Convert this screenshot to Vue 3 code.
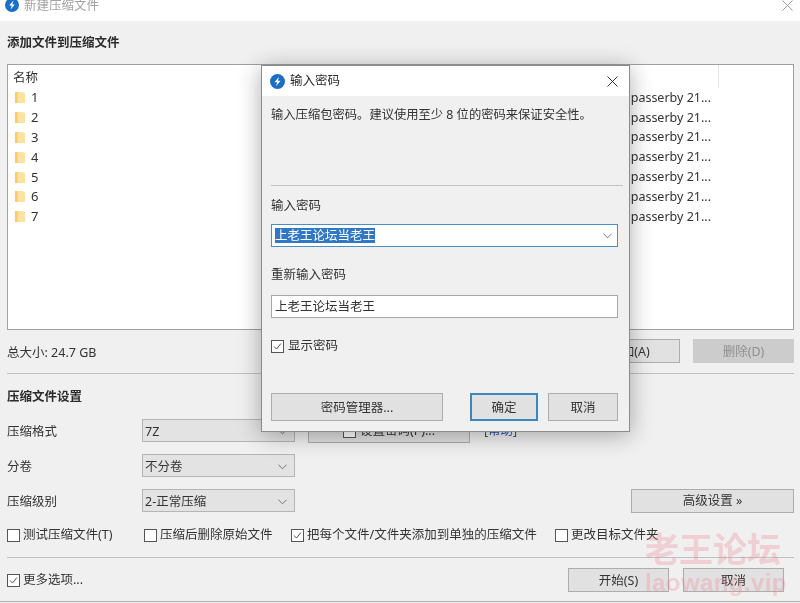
<template>
  <div class="window">
    <div class="titlebar">
      <svg class="logo" viewBox="0 0 14 14"><circle cx="7" cy="7" r="7" fill="#1a6fc4" /><path d="M8.4 2.6 4.2 7.6h2.5L5.6 11.4l4.2-5H7.3z" fill="#fff" /></svg>
      <span class="win-title">新建压缩文件</span>
      <svg class="close" viewBox="0 0 11 11"><path d="M.5.5l10 10M10.5.5l-10 10" stroke="#9a9a9a" fill="none" /></svg>
    </div>

    <div class="content">
      <div class="heading first">添加文件到压缩文件</div>

      <div class="list">
        <div class="list-head">
          <span>名称</span>
          <i class="col-line"></i>
        </div>
        <div class="list-row" v-for="n in rows" :key="n">
          <svg class="folder" viewBox="0 0 10 12"><path d="M0 1h7l3 1v10H0z" fill="#fde2a2" /><path d="M0 1h2.5v11H0z" fill="#f6cc6e" /></svg>
          <span class="row-name">{{ n }}</span>
          <span class="row-user">passerby 21...</span>
        </div>
      </div>

      <div class="summary">
        <span class="total">总大小: 24.7 GB</span>
        <button class="btn add">添加(A)</button>
        <button class="btn del">删除(D)</button>
      </div>

      <div class="rule"></div>
      <div class="heading second">压缩文件设置</div>

      <div class="form-row">
        <span class="form-label">压缩格式</span>
        <div class="select"><span>7Z</span><svg class="chev" viewBox="0 0 10 6"><path d="M.5.5 5 5 9.5.5" /></svg></div>
        <button class="btn pass"><i class="box"></i>设置密码(P)...</button>
        <span class="help">[帮助]</span>
      </div>
      <div class="form-row">
        <span class="form-label">分卷</span>
        <div class="select"><span>不分卷</span><svg class="chev" viewBox="0 0 10 6"><path d="M.5.5 5 5 9.5.5" /></svg></div>
      </div>
      <div class="form-row">
        <span class="form-label">压缩级别</span>
        <div class="select"><span>2-正常压缩</span><svg class="chev" viewBox="0 0 10 6"><path d="M.5.5 5 5 9.5.5" /></svg></div>
        <button class="btn advanced">高级设置 »</button>
      </div>

      <div class="options">
        <label class="check" v-for="o in options" :key="o.text">
          <i class="box"><svg v-if="o.on" viewBox="0 0 13 13"><path d="M2.5 6.5 5.3 9.5 10.5 3" /></svg></i>
          {{ o.text }}
        </label>
      </div>

      <div class="rule bottom-rule"></div>

      <div class="footer">
        <label class="check">
          <i class="box"><svg viewBox="0 0 13 13"><path d="M2.5 6.5 5.3 9.5 10.5 3" /></svg></i>
          更多选项...
        </label>
        <button class="btn foot start">开始(S)</button>
        <button class="btn foot">取消</button>
      </div>
    </div>
    <div class="edge"></div>

    <div class="dialog">
      <div class="dlg-title">
        <svg class="dlg-logo" viewBox="0 0 14 14"><circle cx="7" cy="7" r="7" fill="#1a6fc4" /><path d="M8.4 2.6 4.2 7.6h2.5L5.6 11.4l4.2-5H7.3z" fill="#fff" /></svg>
        <span>输入密码</span>
        <svg class="dlg-close" viewBox="0 0 11 11"><path d="M.5.5l10 10M10.5.5l-10 10" stroke="#333" fill="none" /></svg>
      </div>
      <div class="dlg-body">
        <p class="dlg-hint">输入压缩包密码。建议使用至少 8 位的密码来保证安全性。</p>
        <div class="dlg-rule"></div>
        <div class="dlg-label">输入密码</div>
        <div class="field combo">
          <span class="selected">上老王论坛当老王</span>
          <svg class="chev" viewBox="0 0 10 6"><path d="M.5.5 5 5 9.5.5" /></svg>
        </div>
        <div class="dlg-label again">重新输入密码</div>
        <div class="field plain">上老王论坛当老王</div>
        <label class="check show">
          <i class="box"><svg viewBox="0 0 13 13"><path d="M2.5 6.5 5.3 9.5 10.5 3" /></svg></i>
          显示密码
        </label>
        <div class="dlg-actions">
          <button class="btn manager">密码管理器...</button>
          <button class="btn ok">确定</button>
          <button class="btn cancel">取消</button>
        </div>
      </div>
    </div>

    <div class="watermark">
      <div class="wm-cn">老王论坛</div>
      <div class="wm-en">laowang.vip</div>
    </div>
  </div>
</template>

<script setup>
const rows = [1, 2, 3, 4, 5, 6, 7];
const options = [
  { text: "测试压缩文件(T)", on: false },
  { text: "压缩后删除原始文件", on: false },
  { text: "把每个文件/文件夹添加到单独的压缩文件", on: true },
  { text: "更改目标文件夹", on: false }
];
</script>

<style>
html, body {
  margin: 0;
  background: #f0f0f0;
}
</style>

<style scoped>
.window {
  position: relative;
  width: 800px;
  height: 603px;
  overflow: hidden;
  background: #f0f0f0;
  color: #333;
  font-family: "Noto Sans", "Noto Sans CJK SC", sans-serif;
  font-size: 12.5px;
  line-height: 18px;
  filter: blur(0.35px);
}
button {
  font: inherit;
  color: inherit;
  padding: 0;
}
.titlebar {
  height: 21px;
  background: #fff;
  display: flex;
  overflow: hidden;
  position: relative;
}
.logo {
  width: 14px;
  height: 14px;
  margin: -2px 0 0 5px;
  flex: none;
}
.win-title {
  margin: -3px 0 0 5px;
  color: #a3a3a3;
}
.close {
  width: 11px;
  height: 11px;
  margin: 0 7px 0 auto;
}
.content {
  padding: 0 6px 0 7px;
}
.heading {
  font-weight: 700;
  color: #2b2b2b;
  display: flex;
  align-items: center;
}
.first {
  height: 43px;
}
.second {
  height: 45px;
}
.list {
  height: 266px;
  box-sizing: border-box;
  background: #fff;
  border: 1px solid #a0a0a0;
}
.list-head {
  height: 20px;
  padding: 2.5px 0 0 5px;
  display: flex;
  align-items: center;
  position: relative;
}
.col-line {
  position: absolute;
  left: 710px;
  top: 0;
  width: 1px;
  height: 23px;
  background: #e6e6e6;
}
.list-row {
  height: 19.8px;
  display: flex;
  align-items: center;
  padding-left: 7px;
}
.folder {
  width: 10px;
  height: 12px;
  flex: none;
}
.row-name {
  margin-left: 6px;
  font-size: 13px;
}
.row-user {
  margin-left: auto;
  margin-right: 82px;
  font-size: 12.5px;
  padding-top: 1px;
}
.summary {
  margin-top: 9px;
  height: 24px;
  display: flex;
  align-items: center;
}
.total {
  padding-top: 3px;
}
.btn {
  box-sizing: border-box;
  background: #e1e1e1;
  border: 1px solid #adadad;
  height: 24px;
  display: block;
  padding-top: 1px;
}
.add {
  width: 101px;
  margin-left: auto;
}
.del {
  width: 101px;
  margin-left: 13px;
  background: #cccccc;
  border-color: #cccccc;
  color: #8f8f8f;
}
.rule {
  height: 1px;
  background: #c0c0c0;
  margin-top: 10px;
}
.form-row {
  display: flex;
  align-items: center;
  height: 23px;
  margin-bottom: 12px;
}
.form-label {
  width: 135px;
  flex: none;
  padding-top: 2px;
}
.select {
  box-sizing: border-box;
  width: 153px;
  height: 23px;
  flex: none;
  display: flex;
  align-items: center;
  justify-content: space-between;
  padding: 2px 7px 0 2px;
  background: #e3e3e3;
  border: 1px solid #b5b5b5;
}
.chev {
  width: 9px;
  height: 6px;
  fill: none;
  stroke: #666;
}
.pass {
  width: 162px;
  margin-left: 13px;
  display: flex;
  align-items: center;
  justify-content: center;
  gap: 4px;
}
.help {
  margin-left: 14px;
  color: #2b4fb5;
}
.advanced {
  width: 163px;
  margin-left: auto;
}
.options {
  display: grid;
  grid-template-columns: 137px 147px 264px auto;
  height: 20px;
  align-items: center;
  margin-top: 13px;
}
.check {
  display: flex;
  align-items: center;
  gap: 3px;
  white-space: nowrap;
}
.box {
  box-sizing: border-box;
  width: 13px;
  height: 13px;
  flex: none;
  display: block;
  background: #fff;
  border: 1px solid #555;
}
.box svg {
  display: block;
  width: 11px;
  height: 11px;
  fill: none;
  stroke: #333;
}
.bottom-rule {
  margin-top: 12px;
}
.footer {
  display: flex;
  align-items: center;
  padding-top: 10px;
  padding-right: 10px;
  height: 24px;
}
.foot {
  width: 101px;
  margin-left: 14px;
}
.start {
  margin-left: auto;
}
.edge {
  height: 1px;
  background: #b4b4b4;
  margin-top: 9px;
}
.dialog {
  position: absolute;
  left: 261px;
  top: 65px;
  width: 369px;
  height: 367px;
  box-sizing: border-box;
  border: 1px solid #8c8c8c;
  background: #f0f0f0;
  box-shadow: 0 3px 22px rgba(0, 0, 0, 0.32);
}
.dlg-title {
  height: 30px;
  background: #fff;
  display: flex;
  align-items: center;
  padding-left: 8px;
  color: #2b2b2b;
}
.dlg-logo {
  width: 15px;
  height: 15px;
  margin-right: 5px;
}
.dlg-close {
  width: 11px;
  height: 11px;
  margin: 0 11px 0 auto;
}
.dlg-body {
  padding: 0 6px 0 9px;
}
.dlg-hint {
  margin: 10px 0 0;
  font-size: 12.3px;
}
.dlg-rule {
  height: 1px;
  background: #c4c4c4;
  margin-top: 61px;
}
.dlg-label {
  margin-top: 11px;
}
.again {
  margin-top: 19px;
}
.field {
  box-sizing: border-box;
  width: 347px;
  height: 23px;
  margin-top: 9px;
  padding: 0 3px;
  background: #fff;
  border: 1px solid #a8a8a8;
  display: flex;
  align-items: center;
}
.plain {
  margin-top: 11px;
}
.combo {
  border-color: #4a90c8;
  justify-content: space-between;
  padding-right: 5px;
}
.selected {
  background: #3078c5;
  color: #fff;
  line-height: 15px;
}
.show {
  margin-top: 19px;
  gap: 4px;
}
.dlg-actions {
  display: flex;
  margin-top: 38px;
}
.dlg-actions .btn {
  height: 28px;
  padding-top: 2px;
}
.manager {
  width: 172px;
}
.ok {
  width: 68px;
  margin-left: 27px;
  border: 2px solid #3d87bf;
}
.cancel {
  width: 70px;
  margin-left: 10px;
}
.watermark {
  position: absolute;
  left: 645px;
  top: 528px;
  color: rgba(240, 130, 150, 0.3);
  pointer-events: none;
  font-weight: 700;
  white-space: nowrap;
}
.wm-cn {
  font-size: 34px;
  line-height: 42px;
}
.wm-en {
  font-size: 24px;
  line-height: 26px;
  font-family: "Liberation Sans", sans-serif;
  letter-spacing: 0.4px;
}
</style>
